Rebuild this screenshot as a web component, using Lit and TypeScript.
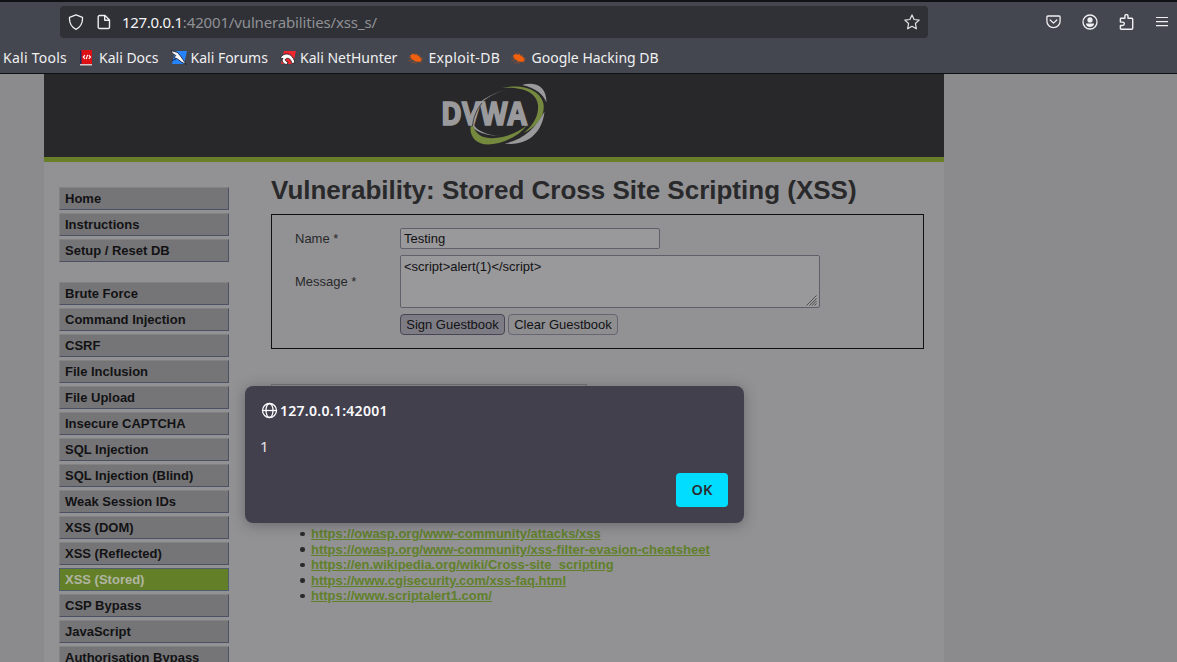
import { LitElement, html, css, svg } from "lit";
import { customElement } from "lit/decorators.js";
import { classMap } from "lit/directives/class-map.js";

const docsIcon = svg`<svg width="16" height="16" viewBox="0 0 16 16"><path d="M1 .6h2.500V15H1z" fill="#1d2a5c"/><path d="M2.500 0H13v14H2.500z" fill="#dc1014"/><path d="M1 14h12v1.500H1z" fill="#d9c6c6"/><path d="M6 5.200 4.300 7 6 8.800M9.800 5.200 11.500 7 9.800 8.800M8.600 4.900 7.200 9.100" fill="none" stroke="#fff" stroke-width="1.100"/></svg>`;
const forumsIcon = svg`<svg width="16" height="16" viewBox="0 0 16 16"><path d="M4 1h12l-3 13H1z" fill="#2583fb"/><path d="M0 .5 6.500 2.500 9.500 6l2.500 3.500 3.200 5-4.700-2.500L6.500 9 3 7.500 4.800 5.500 1.500 3.500z" fill="#f4f6fa" stroke="#15171c" stroke-width=".8"/><path d="m1 10.500 4-1.500" stroke="#15171c" stroke-width=".8"/></svg>`;
const netIcon = svg`<svg width="16" height="16" viewBox="0 0 16 16"><path d="M4 1h12l-3 13H1z" fill="#ed2630"/><path d="M1.500 6.500C4 3 9.500 3.300 12 6.500s2.500 5 2.800 6.500l-3 .5C11.500 10 9 7.500 6.500 8.500s-1 3 1.500 3.500l-1 2.500C2.500 14 1.200 10.500 3 8.500L0 8.200z" fill="#fff" stroke="#15171c" stroke-width=".8"/></svg>`;
const bugIcon = svg`<svg width="16" height="16" viewBox="0 0 16 16"><path d="M2 5.500 4.500 4l4 .6 3.500 2.700 1.800 3-2 1.700-4-.5L3.500 9z" fill="#f1600f"/><path d="M4 2.500 6.500 5M7.500 2.500l2 3M11 4l.8 3.500 2.700 1M.5 7.500l4 1M0 11l5-1.500M3 13l5-2M12 9.500l3-.7M11 11l2.500 2M6 13h3" stroke="#d9570f" stroke-width=".6" opacity=".7" fill="none"/></svg>`;

const bookmarks = [
  { label: "Kali Tools", icon: null, cls: "tools" },
  { label: "Kali Docs", icon: docsIcon, cls: "docs" },
  { label: "Kali Forums", icon: forumsIcon, cls: "forums" },
  { label: "Kali NetHunter", icon: netIcon, cls: "net" },
  { label: "Exploit-DB", icon: bugIcon, cls: "edb" },
  { label: "Google Hacking DB", icon: bugIcon, cls: "ghdb" },
];

@customElement("browser-chrome")
class BrowserChrome extends LitElement {
  static styles = css`
    :host { display: block; height: 74px; box-sizing: border-box; background: #44474f; border-top: 2px solid #101115; border-bottom: 1px solid #101115; font-family: "Noto Sans", sans-serif; color: #f0f0f2; }
    svg { display: block; flex: none; }
    .toolbar { display: flex; height: 32px; padding: 4px 7px 0 60px; align-items: center; }
    .url { width: 868px; height: 32px; box-sizing: border-box; display: flex; align-items: center; background: #2f3136; border-radius: 4px; padding: 0 8px; font-size: 15px; }
    .url .page { margin: 0 10px 0 12px; }
    .address { flex: 1; color: #8f9094; white-space: nowrap; letter-spacing: -0.150px; }
    .address b { font-weight: 400; color: #f4f4f6; letter-spacing: -0.300px; }
    .actions { display: flex; margin-left: auto; gap: 20px; }
    .marks { display: flex; height: 36px; align-items: center; font-size: 14px; padding: 1px 0 0 3px; white-space: nowrap; }
    .mark { display: flex; align-items: center; gap: 4px; }
    .mark svg { margin-top: 2px; }
    .edb svg, .ghdb svg { margin-left: -1px; margin-right: 1px; }
    .tools { width: 76px; letter-spacing: 0.250px; } .docs { width: 91.500px; } .forums { width: 109.500px; } .net { width: 128.500px; } .edb { width: 103px; letter-spacing: 0.330px; }
  `;
  render() {
    return html`
      <div class="toolbar">
        <div class="url">
          <svg width="16" height="16" viewBox="0 0 16 16" fill="none" stroke="#eeeef0" stroke-width="1.300" stroke-linejoin="round"><path d="M8 .8 14.500 3.400C14.800 8.500 12.800 13 8 15.300 3.200 13 1.200 8.500 1.500 3.400z"/></svg>
          <svg class="page" width="16" height="16" viewBox="0 0 16 16" fill="none" stroke="#eeeef0" stroke-width="1.400" stroke-linejoin="round"><path d="M3.500 1.500H9l4.500 4.500v7.200a1.300 1.300 0 0 1-1.300 1.300H3.500a1.300 1.300 0 0 1-1.300-1.300V2.800a1.300 1.300 0 0 1 1.300-1.300zM8.700 1.500v4.800h4.800"/></svg>
          <span class="address"><b>127.0.0.1</b>:42001/vulnerabilities/xss_s/</span>
          <svg width="16" height="16" viewBox="0 0 16 16" fill="none" stroke="#e4e4e6" stroke-width="1.200" stroke-linejoin="round"><path d="M8 .9l2.100 4.600 5.100.6-3.800 3.400 1 5.300L8 12.300l-4.400 2.500 1-5.300L.8 6.100l5.100-.6z"/></svg>
        </div>
        <div class="actions">
          <svg width="16" height="16" viewBox="-.5 0 16 16" fill="none" stroke="#f0f0f2" stroke-width="1.300" stroke-linecap="round" stroke-linejoin="round"><path d="M2.400 2h11.200a1 1 0 0 1 1 1v4.300a6.600 6.300 0 0 1-13.200 0V3a1 1 0 0 1 1-1zM4.700 6 8 9.100 11.300 6"/></svg>
          <svg width="17" height="16" viewBox="-1 0 17 16"><circle cx="8" cy="8" r="7" fill="none" stroke="#f0f0f2" stroke-width="1.300"/><circle cx="8" cy="5.900" r="2.600" fill="#f0f0f2"/><path d="M3.900 9.500h8.200c0 2.200-1.900 3.400-4.100 3.400S3.900 11.700 3.900 9.500z" fill="#f0f0f2"/></svg>
          <svg width="16" height="16" viewBox="-.5 0 16 16" fill="none" stroke="#f0f0f2" stroke-width="1.400" stroke-linejoin="round"><path d="M2.500 4.200h3.900V2.100a1.550 1.550 0 0 1 3.100 0v2.100h3.700a1 1 0 0 1 1 1v9.100a1 1 0 0 1-1 1H2.700a.8.8 0 0 1-.8-.8v-3h2.200a1.700 1.700 0 0 0 0-3.400H1.900V5a.8.8 0 0 1 .6-.8z"/></svg>
          <svg width="16" height="16" viewBox="0 0 16 16" stroke="#f0f0f2" stroke-width="1.200"><path d="M2 3.500h12M2 7.700h12M2 11.700h12"/></svg>
        </div>
      </div>
      <div class="marks">${bookmarks.map((m) => html`<div class="mark ${m.cls}">${m.icon}<span>${m.label}</span></div>`)}</div>
    `;
  }
}

const menu = [
  ["Home", "Instructions", "Setup / Reset DB"],
  ["Brute Force", "Command Injection", "CSRF", "File Inclusion", "File Upload", "Insecure CAPTCHA", "SQL Injection", "SQL Injection (Blind)", "Weak Session IDs", "XSS (DOM)", "XSS (Reflected)", "XSS (Stored)", "CSP Bypass", "JavaScript", "Authorisation Bypass"],
];

const links = [
  "https://owasp.org/www-community/attacks/xss",
  "https://owasp.org/www-community/xss-filter-evasion-cheatsheet",
  "https://en.wikipedia.org/wiki/Cross-site_scripting",
  "https://www.cgisecurity.com/xss-faq.html",
  "https://www.scriptalert1.com/",
];

@customElement("dvwa-page")
class DvwaPage extends LitElement {
  static styles = css`
    :host { display: block; height: 588px; overflow: hidden; background: #8b8b8d; font: 13px/15.600px "Liberation Sans", Arial, sans-serif; color: #29292b; }
    .container { width: 900px; height: 100%; margin-left: 44px; background: #929294; }
    .header { height: 83px; background: #28282a; border-bottom: 5px solid #697e29; display: flex; justify-content: center; }
    .logo { display: block; margin: 4px 0 0 0; }
    .body { display: flex; }
    .menu { width: 170px; margin: 25px 42px 0 15px; flex: none; }
    .group { display: flex; flex-direction: column; gap: 3px; margin-bottom: 20px; }
    .item { height: 23px; box-sizing: border-box; border: 1px solid; border-color: #828283 #4b5063 #4b5063 #828283; background: #757577; color: #121214; font-weight: 700; line-height: 21px; padding-left: 5px; white-space: nowrap; }
    .item.on { background: #638028; color: #b0b5a3; border-color: #505f70; }
    .main { width: 653px; padding-top: 13px; }
    h1 { font-size: 26px; line-height: 31px; margin: 0 0 8px; color: #29292b; white-space: nowrap; }
    .form { height: 135px; box-sizing: border-box; border: 1px solid #101012; background: #929294; padding: 13px 0 0 23px; display: grid; grid-template-columns: 105px auto; grid-template-rows: 21px 53px 21px; row-gap: 6px; align-items: center; justify-content: start; }
    .field { box-sizing: border-box; height: 100%; border: 1px solid #605f6c; border-radius: 2px; background: #99999b; color: #121214; padding: 0 3px; }
    .name { width: 260px; line-height: 20px; }
    .msg { width: 420px; padding-top: 3px; display: flex; justify-content: space-between; }
    .grip { align-self: flex-end; display: block; margin: 0 -1px 1px 0; }
    .buttons { grid-column: 2; display: flex; gap: 3px; }
    .btn { height: 21px; box-sizing: border-box; border: 1px solid #666571; border-radius: 4px; background: #8e8e91; color: #121214; line-height: 20px; text-align: center; width: 110px; white-space: nowrap; }
    .btn.active { width: 105px; background: #7d7c84; border-color: #484655; }
    .comment { width: 316px; height: 46px; box-sizing: border-box; border: 1px solid #747476; margin-top: 35px; }
    ul { margin: 96px 0 0; padding-left: 29px; list-style: none; }
    li { display: flex; align-items: center; gap: 6.500px; }
    li::before { content: ""; width: 4.500px; height: 4.500px; border-radius: 50%; background: #29292b; }
    a { color: #61802a; font-weight: 700; text-decoration: underline; white-space: nowrap; }
  `;
  render() {
    return html`
      <div class="container">
        <div class="header">
          <svg class="logo" width="112" height="72" viewBox="0 0 112 72">
            <path d="M70 11C50 17 36 27 34.500 41c0 9 9 15.500 28 17C42 57.500 31.500 51 32 40 33.500 27 49 17 70 11z" fill="#97979a"/>
            <text x="3" y="47.300" font-family="Open Sans, sans-serif" font-weight="700" font-size="32.500" textLength="86" lengthAdjust="spacingAndGlyphs" fill="#9a9a9d" stroke="#9a9a9d" stroke-width="1.700">DVWA</text>
            <path d="M44 25C38.500 32 35.500 39 34.500 48" fill="none" stroke="#28282a" stroke-width=".8"/>
            <path d="M64 10c22-5 39 3 41.500 16 2 13-8 24-20 29 9-7 15.500-17 14.500-28C98.500 15 86 8.500 64 10z" fill="#74883e"/>
            <path d="M32.500 48.500h3c3 11 15 13.500 29 10.500 9-2 17-6 24.500-11.500C80 59 63 66.500 50 66.500c-12 0-18.500-8-17.500-18z" fill="#74883e"/>
            <path d="M84 7C96 3.500 108.500 7 108.500 24.500 105.500 17 98.500 10 84 7z" fill="#9a9a9d"/>
            <path d="M106.500 33.500c-2 21-17 35-40 32C85 62 98 50 106.500 33.500z" fill="#9a9a9d"/>
          </svg>
        </div>
        <div class="body">
          <div class="menu">
            ${menu.map((g) => html`<div class="group">${g.map((t) => html`<div class=${classMap({ item: true, on: t === "XSS (Stored)" })}>${t}</div>`)}</div>`)}
          </div>
          <div class="main">
            <h1>Vulnerability: Stored Cross Site Scripting (XSS)</h1>
            <div class="form">
              <span>Name *</span><div class="field name">Testing</div>
              <span>Message *</span>
              <div class="field msg"><span>&lt;script&gt;alert(1)&lt;/script&gt;</span>
                <svg class="grip" width="11" height="11" viewBox="0 0 11 11" stroke="#4a4a4d" stroke-width=".9"><path d="M.5 10.500l10-10M3.500 10.500l7-7M6 10.500 10.500 6M8.500 10.500l2-2"/></svg>
              </div>
              <div class="buttons"><div class="btn active">Sign Guestbook</div><div class="btn">Clear Guestbook</div></div>
            </div>
            <div class="comment"></div>
            <ul>${links.map((l) => html`<li><a>${l}</a></li>`)}</ul>
          </div>
        </div>
      </div>
    `;
  }
}

@customElement("alert-dialog")
class AlertDialog extends LitElement {
  static styles = css`
    :host { display: flex; flex-direction: column; width: 499px; height: 137px; box-sizing: border-box; padding: 16px; border-radius: 8px; background: #43404d; box-shadow: 0 2px 14px rgba(30, 30, 36, 0.35); font: 15px/18px "Noto Sans", sans-serif; color: #fbfbfe; }
    .title { display: flex; align-items: center; gap: 2px; font-weight: 600; font-size: 14px; letter-spacing: 0.280px; }
    .title svg { margin-top: -1px; }
    .text { margin: 17px 0 0 -1px; font-size: 15px; color: #e4e4e8; }
    .ok { margin: auto 0 0 auto; width: 52px; height: 34px; border-radius: 4px; background: #00ddff; color: #2b2a33; font-weight: 600; font-size: 14.500px; line-height: 32px; text-align: center; }
  `;
  render() {
    return html`
      <div class="title">
        <svg width="17" height="17" viewBox="0 0 17 17" fill="none" stroke="#fbfbfe" stroke-width="1.300"><circle cx="8.500" cy="8.500" r="7"/><ellipse cx="8.500" cy="8.500" rx="3.500" ry="7"/><path d="M1.500 8.500h14"/></svg>
        <span>127.0.0.1:42001</span>
      </div>
      <div class="text">1</div>
      <div class="ok">OK</div>
    `;
  }
}

@customElement("app-root")
class AppRoot extends LitElement {
  static styles = css`
    :host { display: block; position: relative; width: 1177px; height: 662px; overflow: hidden; }
    .dialog { position: absolute; left: 245px; top: 386px; }
  `;
  render() {
    return html`<browser-chrome></browser-chrome><dvwa-page></dvwa-page><alert-dialog class="dialog"></alert-dialog>`;
  }
}
